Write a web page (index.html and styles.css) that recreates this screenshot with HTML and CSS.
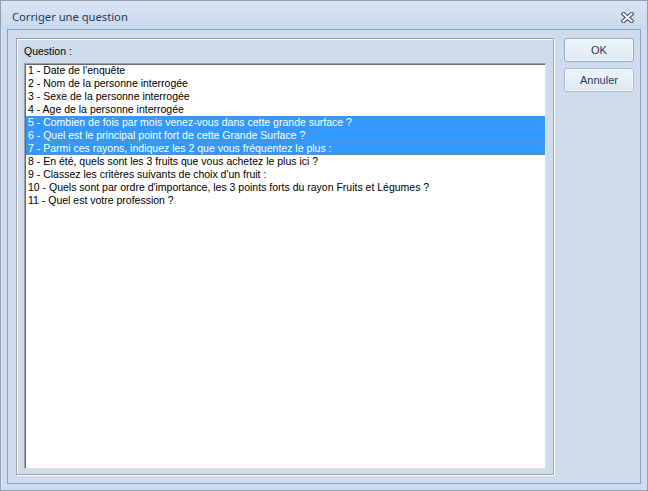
FILE: index.html
```html
<!DOCTYPE html>
<html>
<head>
<meta charset="utf-8">
<link rel="stylesheet" href="styles.css">
</head>
<body>
<div class="window">
  <div class="titlebar">
    <span class="title">Corriger une question</span>
    <span class="close">
      <svg width="13" height="11" viewBox="0 0 13 11">
        <path d="M2.5 2 L10.5 9 M10.5 2 L2.5 9" stroke="#3c4658" stroke-width="4.2" stroke-linecap="square" fill="none"/>
        <path d="M2.5 2 L10.5 9 M10.5 2 L2.5 9" stroke="#ffffff" stroke-width="2.2" stroke-linecap="square" fill="none"/>
      </svg>
    </span>
  </div>
  <div class="client">
    <div class="group">
      <div class="label">Question :</div>
      <div class="listbox">
        <div class="row">1 - Date de l'enquête</div>
        <div class="row">2 - Nom de la personne interrogée</div>
        <div class="row">3 - Sexe de la personne interrogée</div>
        <div class="row">4 - Age de la personne interrogée</div>
        <div class="row sel">5 - Combien de fois par mois venez-vous dans cette grande surface ?</div>
        <div class="row sel">6 - Quel est le principal point fort de cette Grande Surface ?</div>
        <div class="row sel focus">7 - Parmi ces rayons, indiquez les 2 que vous fréquentez le plus :</div>
        <div class="row">8 - En été, quels sont les 3 fruits que vous achetez le plus ici ?</div>
        <div class="row">9 - Classez les critères suivants de choix d'un fruit :</div>
        <div class="row">10 - Quels sont par ordre d'importance, les 3 points forts du rayon Fruits et Légumes ?</div>
        <div class="row">11 - Quel est votre profession ?</div>
      </div>
    </div>
    <div class="buttons">
      <div class="btn default">OK</div>
      <div class="btn">Annuler</div>
    </div>
  </div>
</div>
</body>
</html>
```
FILE: styles.css
```css
html, body {
  margin: 0;
  padding: 0;
  width: 648px;
  height: 491px;
  overflow: hidden;
  background: #cfdbec;
}
.window {
  box-sizing: border-box;
  width: 648px;
  height: 491px;
  border: 1px solid #8e9fb8;
  background: #cfdcee;
  display: flex;
  flex-direction: column;
  box-shadow: inset 1px 1px 0 #e2ebf6;
}
.titlebar {
  height: 28px;
  flex: none;
  display: flex;
  align-items: center;
  padding: 0 0 0 11px;
  background: linear-gradient(#d9e4f2, #cad9ed);
  position: relative;
}
.title {
  font-family: "Noto Sans", "Open Sans", sans-serif;
  font-size: 11.2px;
  color: #1e3a5c;
  padding-top: 2px;
}
.close {
  position: absolute;
  left: 620px;
  top: 11px;
  width: 13px;
  height: 11px;
  line-height: 0;
}
.client {
  flex: 1;
  margin: 0 6px 6px 6px;
  border: 1px solid #8ba3c3;
  display: flex;
  padding: 8px 6px 8px 8px;
  gap: 10px;
  background: #cfdcee;
}
.group {
  box-sizing: border-box;
  width: 538px;
  height: 437px;
  border: 1px solid #a0a0a0;
  box-shadow: inset 1px 1px 0 #ffffff, 1px 1px 0 #ffffff;
  padding: 0 7px 5px 7px;
  display: flex;
  flex-direction: column;
}
.label {
  font-family: "Liberation Sans", Arial, sans-serif;
  font-size: 10.5px;
  color: #000;
  height: 24px;
  line-height: 17px;
  padding: 4px 0 0 0;
  box-sizing: border-box;
}
.listbox {
  flex: 1;
  background: #fff;
  border-style: solid;
  border-width: 1px;
  border-color: #a0a0a0 #e3e3e3 #e3e3e3 #a0a0a0;
  box-shadow: inset 1px 1px 0 #696969;
  padding: 0 0 0 1px;
  font-family: "Liberation Sans", Arial, sans-serif;
  font-size: 10.5px;
  color: #000;
}
.row {
  box-sizing: border-box;
  height: 13px;
  line-height: 12px;
  white-space: nowrap;
  padding-left: 2px;
}
.row.sel {
  background: #3399ff;
  color: #fff;
}
.row.focus {
  outline: 1px dotted rgba(214, 120, 40, 0.28);
  outline-offset: -1px;
}
.buttons {
  display: flex;
  flex-direction: column;
  gap: 6px;
}
.btn {
  box-sizing: border-box;
  width: 70px;
  height: 24px;
  border: 1px solid #a9bbd3;
  border-radius: 3px;
  background: linear-gradient(#edf3fa, #dfe8f4);
  font-family: "Liberation Sans", Arial, sans-serif;
  font-size: 11px;
  color: #1e3a5c;
  display: flex;
  align-items: center;
  justify-content: center;
  box-shadow: inset 0 0 0 1px #f4f8fc;
}
.btn.default {
  border-color: #93aac8;
}
```
